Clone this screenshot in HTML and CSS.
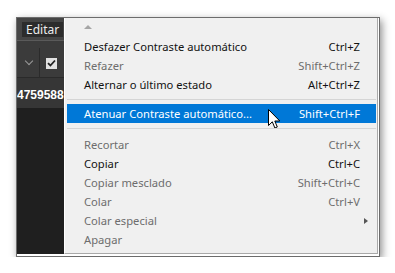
FILE: index.html
```html
<!DOCTYPE html>
<html lang="pt">
<head>
  <meta charset="UTF-8">
  <title>Editar</title>
  <link rel="stylesheet" href="styles.css">
</head>
<body>
  <div class="window">
    <div class="sidebar">
      <div class="topbar">
        <span class="tab">Editar</span>
      </div>
      <div class="tools">
        <span class="chevron"></span>
        <span class="divider"></span>
        <span class="check">
          <svg width="9" height="8" viewBox="0 0 9 8"><path d="M1 4.2 L3.4 6.5 L8 1.5" fill="none" stroke="#222" stroke-width="1.8"/></svg>
        </span>
      </div>
      <div class="value">4759588</div>
    </div>

    <div class="menu">
      <div class="scroll-up"></div>

      <div class="item"><span>Desfazer Contraste automático</span><span class="key">Ctrl+Z</span></div>
      <div class="item disabled"><span>Refazer</span><span class="key">Shift+Ctrl+Z</span></div>
      <div class="item"><span>Alternar o último estado</span><span class="key">Alt+Ctrl+Z</span></div>

      <div class="sep"></div>

      <div class="item active">
        <span>Atenuar Contraste automático...</span><span class="key">Shift+Ctrl+F</span>
        <svg class="cursor" width="13" height="21" viewBox="0 0 13 21">
          <path d="M0.5 0.5 L0.5 16.5 L4.3 12.8 L6.9 19 L9.3 18 L6.8 12 L11.8 12 Z" fill="#fff" stroke="#000" stroke-width="1" stroke-linejoin="miter"/>
        </svg>
      </div>

      <div class="sep sep-wide"></div>

      <div class="item disabled"><span>Recortar</span><span class="key">Ctrl+X</span></div>
      <div class="item"><span>Copiar</span><span class="key">Ctrl+C</span></div>
      <div class="item disabled"><span>Copiar mesclado</span><span class="key">Shift+Ctrl+C</span></div>
      <div class="item disabled"><span>Colar</span><span class="key">Ctrl+V</span></div>
      <div class="item disabled"><span>Colar especial</span><span class="submenu"></span></div>
      <div class="item disabled"><span>Apagar</span></div>
    </div>
  </div>
</body>
</html>
```

FILE: styles.css
```css
body {
  margin: 0;
  background: #fff;
  font-family: "Noto Sans", "Open Sans", sans-serif;
  font-size: 11.2px;
}

.window {
  margin: 17px 0 0 16px;
  width: 361px;
  height: 236px;
  display: flex;
  padding: 0 1px 2px 0;
  border: 1px solid #6c6c6c;
  background: #fff;
  box-shadow: 2px 3px 8px rgba(0, 0, 0, 0.45);
}

/* dark panel on the left */
.sidebar {
  width: 47px;
  background: #1f1f1f;
  overflow: hidden;
  flex-shrink: 0;
}

.topbar {
  height: 22px;
  background: #454545;
  border-bottom: 1px solid #5a5a5a;
  display: flex;
  align-items: center;
  padding-left: 5px;
}

.tab {
  background: #2c2c2c;
  color: #ececec;
  padding: 0 4px;
  font-size: 12px;
  line-height: 15px;
  height: 15px;
  white-space: nowrap;
}

.tools {
  height: 37px;
  background: #3b3b3b;
  border-bottom: 1px solid #2a2a2a;
  display: flex;
  align-items: center;
  padding-top: 8px;
  box-sizing: border-box;
}

.chevron {
  width: 5px;
  height: 5px;
  border-right: 1px solid #9a9a9a;
  border-bottom: 1px solid #9a9a9a;
  transform: rotate(45deg);
  margin: 0 7px 4px 9px;
}

.divider {
  width: 1px;
  height: 30px;
  background: #2b2b2b;
  margin-right: 6px;
}

.check {
  width: 11px;
  height: 11px;
  background: #e2e2e2;
  display: flex;
  align-items: center;
  justify-content: center;
}

.value {
  height: 30px;
  background: #363636;
  color: #fff;
  font-weight: bold;
  font-family: "Liberation Sans", sans-serif;
  font-size: 12px;
  line-height: 30px;
  padding-top: 2px;
  box-sizing: border-box;
  white-space: nowrap;
}

/* context menu */
.menu {
  flex: 1;
  background: #f0f0f0;
  border-left: 1px solid #fff;
  border-right: 1px solid #a9a9a9;
  border-bottom: 1px solid #a9a9a9;
  display: flex;
  flex-direction: column;
}

.scroll-up {
  height: 19px;
  position: relative;
}

.scroll-up::before {
  content: "";
  position: absolute;
  left: 19px;
  top: 7px;
  border-left: 4px solid transparent;
  border-right: 4px solid transparent;
  border-bottom: 4px solid #a5a5a5;
}

.item {
  height: 19px;
  display: flex;
  align-items: center;
  justify-content: space-between;
  padding: 0 16px 0 17px;
  margin: 0 1px 0 2px;
  color: #121212;
  position: relative;
  white-space: nowrap;
}

.item.disabled {
  color: #6d6d6d;
}

.item.active {
  background: #0078d7;
  color: #fff;
}

.cursor {
  position: absolute;
  left: 201px;
  top: 5px;
}

.sep {
  height: 10px;
  position: relative;
}

.sep::before {
  content: "";
  position: absolute;
  left: 2px;
  right: 1px;
  top: 5px;
  border-top: 1px solid #d5d5d5;
}

.sep-wide {
  height: 12px;
}

.submenu {
  width: 0;
  height: 0;
  border-top: 3px solid transparent;
  border-bottom: 3px solid transparent;
  border-left: 4px solid #555;
  margin-right: -8px;
}
```
